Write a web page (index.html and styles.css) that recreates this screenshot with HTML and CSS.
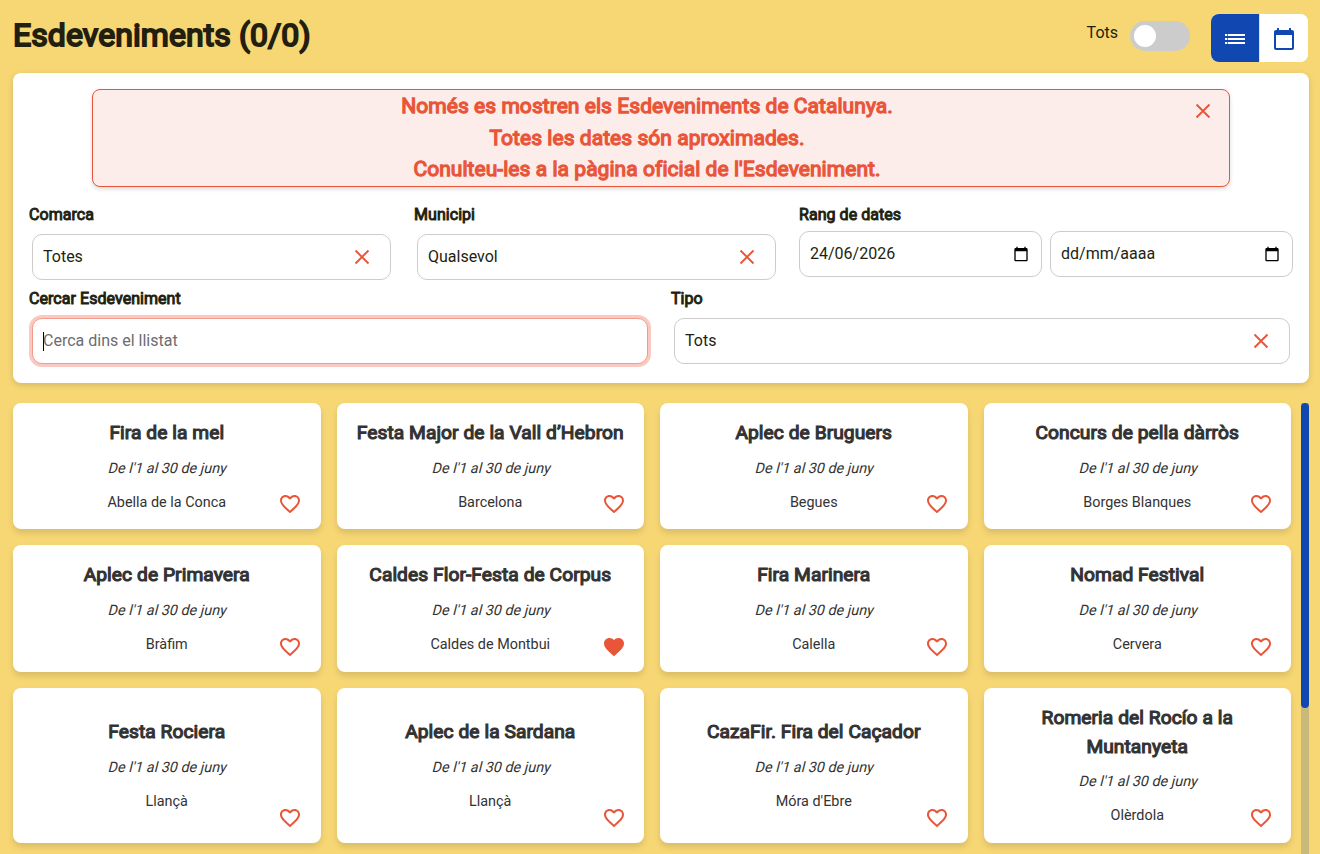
FILE: index.html
```html
<!DOCTYPE html>
<html lang="ca">
<head>
    <meta charset="UTF-8">
    <title>Esdeveniments</title>
    <link rel="stylesheet" href="styles.css">
</head>
<body>
    <svg class="sprite" aria-hidden="true">
        <symbol id="close" viewBox="0 0 24 24"><path d="M5.5 5.5l13 13M18.5 5.5l-13 13" fill="none" stroke="currentColor" stroke-width="1.9"/></symbol>
        <symbol id="heart" viewBox="0 0 24 24"><path d="M16.5 3c-1.74 0-3.41.81-4.5 2.09C10.91 3.81 9.24 3 7.5 3 4.42 3 2 5.42 2 8.5c0 3.78 3.4 6.86 8.55 11.54L12 21.35l1.45-1.32C18.6 15.36 22 12.28 22 8.5 22 5.42 19.58 3 16.5 3zm-4.4 15.55l-.1.1-.1-.1C7.14 14.24 4 11.39 4 8.5 4 6.5 5.5 5 7.5 5c1.54 0 3.04.99 3.57 2.36h1.87C13.46 5.99 14.96 5 16.5 5c2 0 3.5 1.5 3.5 3.5 0 2.89-3.14 5.74-7.9 10.05z"/></symbol>
        <symbol id="heart-full" viewBox="0 0 24 24"><path d="M12 21.35l-1.45-1.32C5.4 15.36 2 12.28 2 8.5 2 5.42 4.42 3 7.5 3c1.74 0 3.41.81 4.5 2.09C13.09 3.81 14.76 3 16.5 3 19.58 3 22 5.42 22 8.5c0 3.78-3.4 6.86-8.55 11.54L12 21.35z"/></symbol>
        <symbol id="calendar" viewBox="0 0 24 24"><path d="M20 3h-1V1h-2v2H7V1H5v2H4c-1.1 0-2 .9-2 2v16c0 1.1.9 2 2 2h16c1.1 0 2-.9 2-2V5c0-1.1-.9-2-2-2zm0 18H4V8h16v13z"/></symbol>
        <symbol id="list" viewBox="0 0 24 24"><path d="M2 7h2.3v2H2zM2 11h2.3v2H2zM2 15h2.3v2H2zM5 7h17v2H5zM5 11h17v2H5zM5 15h17v2H5z"/></symbol>
    </svg>

    <header class="header">
        <h1 class="title bold">Esdeveniments (0/0)</h1>
        <div class="actions">
            <span class="switch-label">Tots</span>
            <span class="switch"></span>
            <div class="view-toggle">
                <button class="view-btn active"><svg class="icon"><use href="#list"/></svg></button>
                <button class="view-btn"><svg class="icon"><use href="#calendar"/></svg></button>
            </div>
        </div>
    </header>

    <section class="filters">
        <div class="alert">
            <p class="bold">Només es mostren els Esdeveniments de Catalunya.<br>Totes les dates són aproximades.<br>Conulteu-les a la pàgina oficial de l'Esdeveniment.</p>
            <svg class="icon alert-close"><use href="#close"/></svg>
        </div>
        <div class="row row-three">
            <div class="field">
                <label class="bold">Comarca</label>
                <div class="input">Totes <svg class="icon clear"><use href="#close"/></svg></div>
            </div>
            <div class="field">
                <label class="bold">Municipi</label>
                <div class="input">Qualsevol <svg class="icon clear"><use href="#close"/></svg></div>
            </div>
            <div class="field">
                <label class="bold">Rang de dates</label>
                <div class="dates">
                    <div class="input">24/06/2026 <svg class="date-icon"><use href="#calendar"/></svg></div>
                    <div class="input">dd/mm/aaaa <svg class="date-icon"><use href="#calendar"/></svg></div>
                </div>
            </div>
        </div>
        <div class="row row-two">
            <div class="field">
                <label class="bold">Cercar Esdeveniment</label>
                <div class="input focused"><span class="caret"></span><span class="placeholder">Cerca dins el llistat</span></div>
            </div>
            <div class="field">
                <label class="bold">Tipo</label>
                <div class="input">Tots <svg class="icon clear"><use href="#close"/></svg></div>
            </div>
        </div>
    </section>

    <main class="list">
        <div class="cards">
            <article class="card"><h2 class="bold">Fira de la mel</h2><p class="date">De l'1 al 30 de juny</p><p>Abella de la Conca</p><svg class="icon fav"><use href="#heart"/></svg></article>
            <article class="card"><h2 class="bold">Festa Major de la Vall d’Hebron</h2><p class="date">De l'1 al 30 de juny</p><p>Barcelona</p><svg class="icon fav"><use href="#heart"/></svg></article>
            <article class="card"><h2 class="bold">Aplec de Bruguers</h2><p class="date">De l'1 al 30 de juny</p><p>Begues</p><svg class="icon fav"><use href="#heart"/></svg></article>
            <article class="card"><h2 class="bold">Concurs de pella dàrròs</h2><p class="date">De l'1 al 30 de juny</p><p>Borges Blanques</p><svg class="icon fav"><use href="#heart"/></svg></article>
            <article class="card"><h2 class="bold">Aplec de Primavera</h2><p class="date">De l'1 al 30 de juny</p><p>Bràfim</p><svg class="icon fav"><use href="#heart"/></svg></article>
            <article class="card"><h2 class="bold">Caldes Flor-Festa de Corpus</h2><p class="date">De l'1 al 30 de juny</p><p>Caldes de Montbui</p><svg class="icon fav"><use href="#heart-full"/></svg></article>
            <article class="card"><h2 class="bold">Fira Marinera</h2><p class="date">De l'1 al 30 de juny</p><p>Calella</p><svg class="icon fav"><use href="#heart"/></svg></article>
            <article class="card"><h2 class="bold">Nomad Festival</h2><p class="date">De l'1 al 30 de juny</p><p>Cervera</p><svg class="icon fav"><use href="#heart"/></svg></article>
            <article class="card"><h2 class="bold">Festa Rociera</h2><p class="date">De l'1 al 30 de juny</p><p>Llançà</p><svg class="icon fav"><use href="#heart"/></svg></article>
            <article class="card"><h2 class="bold">Aplec de la Sardana</h2><p class="date">De l'1 al 30 de juny</p><p>Llançà</p><svg class="icon fav"><use href="#heart"/></svg></article>
            <article class="card"><h2 class="bold">CazaFir. Fira del Caçador</h2><p class="date">De l'1 al 30 de juny</p><p>Móra d'Ebre</p><svg class="icon fav"><use href="#heart"/></svg></article>
            <article class="card"><h2 class="bold">Romeria del Rocío a la Muntanyeta</h2><p class="date">De l'1 al 30 de juny</p><p>Olèrdola</p><svg class="icon fav"><use href="#heart"/></svg></article>
        </div>
        <div class="scrollbar"><div class="thumb"></div></div>
    </main>
</body>
</html>
```

FILE: styles.css
```css
* {
    box-sizing: border-box;
}
body {
    font-family: Roboto, "Liberation Sans", sans-serif;
    font-size: 16px;
    line-height: 24px;
    color: #231f10;
    margin: 0;
    height: 854px;
    overflow: hidden;
    background-color: #f7d774;
    display: flex;
    flex-direction: column;
}
h1, h2, p {
    margin: 0;
}
.sprite {
    display: none;
}
.icon {
    width: 24px;
    height: 24px;
    fill: currentColor;
    display: block;
}
/* regular face thickened, keeps the regular widths */
.bold {
    font-weight: 400;
    -webkit-text-stroke: 0.06em currentColor;
}

.header {
    display: flex;
    justify-content: space-between;
    padding: 14px 12px 0 13px;
    height: 73px;
    flex: none;
}
.title {
    font-size: 32px;
    line-height: 42px;
    letter-spacing: 0.08px;
}
.actions {
    display: flex;
}
.switch-label {
    margin: 7px 12px 0 0;
}
.switch {
    width: 60px;
    height: 30px;
    margin: 7px 21px 0 0;
    padding: 4px;
    border-radius: 15px;
    background-color: #ccc;
}
.switch::before {
    content: "";
    display: block;
    width: 22px;
    height: 22px;
    border-radius: 50%;
    background-color: #fff;
}
.view-toggle {
    display: flex;
    width: 97px;
    height: 48px;
    border-radius: 8px;
    overflow: hidden;
    background-color: #fff;
}
.view-btn {
    width: 48px;
    height: 48px;
    padding: 2px 0 0;
    border: 0;
    display: flex;
    align-items: center;
    justify-content: center;
    background-color: #fff;
    color: #1147b0;
}
.view-btn.active {
    background-color: #1147b0;
    color: #fff;
}
.view-btn:last-child {
    width: 49px;
    border-left: 1px solid #dfe1e8;
}

.filters {
    flex: none;
    height: 310px;
    margin: 0 11px 0 13px;
    padding: 16px;
    border-radius: 8px;
    background-color: #fff;
    box-shadow: 0 2px 6px rgba(0, 0, 0, 0.15);
}
.alert {
    display: flex;
    width: 1138px;
    height: 98px;
    margin: 0 auto;
    padding-right: 14px;
    border: 1px solid #e95539;
    border-radius: 8px;
    background-color: #fdedea;
    color: #e95539;
    box-shadow: 0 2px 4px rgba(0, 0, 0, 0.15);
}
.alert p {
    flex: 1;
    padding: 1px 0 0 10px;
    text-align: center;
    font-size: 21px;
    line-height: 31.5px;
    letter-spacing: 0.05px;
}
.alert-close {
    margin-top: 9px;
}
.row {
    display: grid;
}
.row-three {
    grid-template-columns: 365px 365px 494px;
    gap: 20px;
    margin-top: 16px;
}
.row-two {
    grid-template-columns: 622px 622px;
    gap: 20px;
    margin-top: 4px;
}
.field label {
    display: block;
    letter-spacing: 0.05px;
}
.input {
    display: flex;
    align-items: center;
    justify-content: space-between;
    height: 46px;
    margin: 7px 3px 3px;
    padding: 0 16px 0 10px;
    border: 1px solid #ccc;
    border-radius: 10px;
    background-color: #fff;
}
.clear {
    color: #e95539;
}
.dates {
    display: flex;
    gap: 8px;
    margin-top: 4px;
}
.dates .input {
    flex: 1;
    margin: 0;
    padding-right: 12px;
}
.date-icon {
    width: 16px;
    height: 16px;
    fill: #000;
}
.focused {
    justify-content: flex-start;
    border-color: #f29b8c;
    box-shadow: 0 0 0 3px #f9c9c2;
}
.caret {
    width: 1px;
    height: 19px;
    margin-right: -1px;
    background-color: #000;
}
.placeholder {
    color: #6c6c70;
}

.list {
    display: flex;
    flex: 1;
    min-height: 0;
    padding: 20px 11px 0 13px;
    gap: 10px;
}
.cards {
    flex: 1;
    display: grid;
    grid-template-columns: repeat(4, 1fr);
    grid-template-rows: 126.4px 126.4px 155.2px;
    gap: 16px;
}
.card {
    position: relative;
    display: flex;
    flex-direction: column;
    justify-content: center;
    padding: 0 16px;
    text-align: center;
    font-size: 14.4px;
    line-height: 21.6px;
    border-radius: 8px;
    background-color: #fff;
    color: #333;
    box-shadow: 0 4px 6px rgba(0, 0, 0, 0.12);
}
.card h2 {
    font-size: 19.2px;
    line-height: 28.8px;
    letter-spacing: 0.06px;
}
.card .date {
    margin: 10px 0 12.4px;
    padding-left: 2px;
    transform: skewX(-14deg);
}
.fav {
    position: absolute;
    right: 18.2px;
    bottom: 13.2px;
    color: #e95539;
}
.scrollbar {
    width: 8px;
    background-color: #c9b97b;
}
.thumb {
    height: 305px;
    border-radius: 4px;
    background-color: #1147b0;
}
```
